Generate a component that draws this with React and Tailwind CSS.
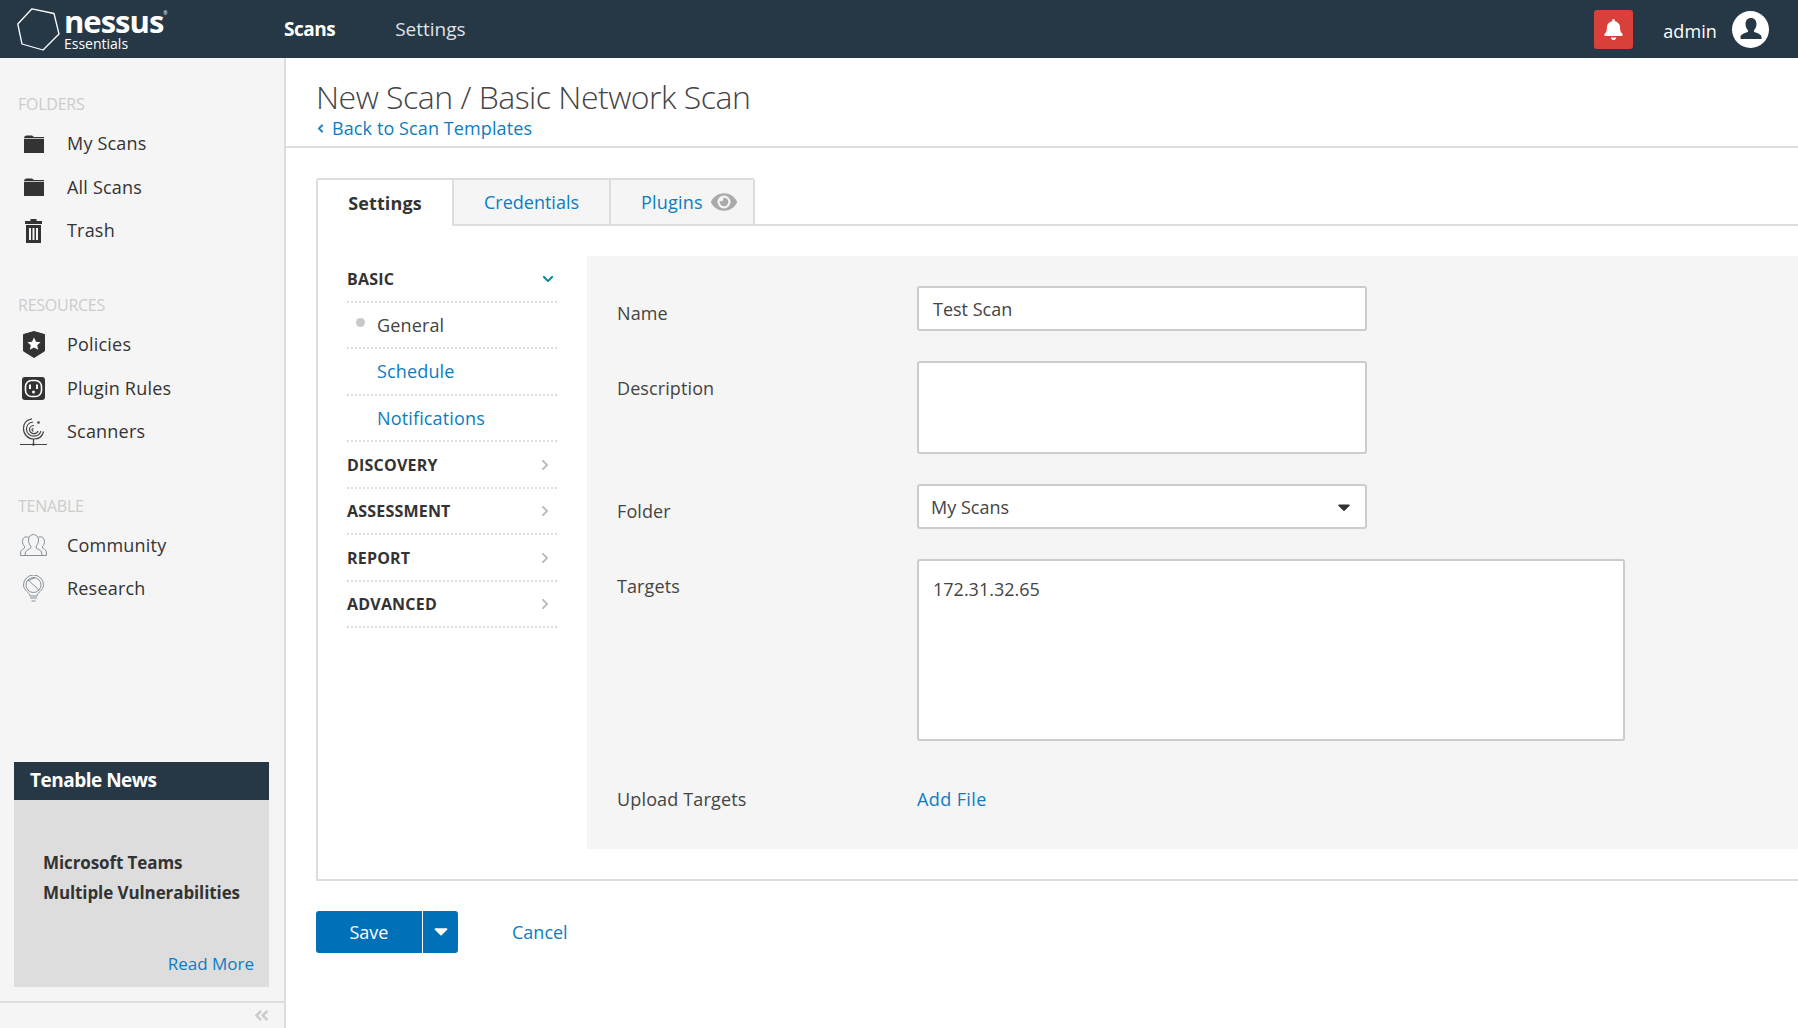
import React from 'react';
import { FaBell, FaEye, FaChevronDown, FaChevronRight, FaChevronLeft, FaCaretDown, FaAngleDoubleLeft } from 'react-icons/fa';

const FolderIcon = () => (
  <svg width="20" height="18" viewBox="0 0 20 18" fill="#333">
    <path d="M0 3 Q0 1 2 0.500 L8 0.500 L10 2 L20 2 L20 3.200 L0 3.200Z" />
    <rect x="0" y="4" width="20" height="14" />
  </svg>
);

const TrashIcon = () => (
  <svg width="17" height="24" viewBox="0 0 17 24" fill="#333">
    <path d="M5.500 0h6v2H17v3H0V2h5.500z" />
    <path fillRule="evenodd" d="M1 6h15v18H1zM4 9v12h2V9zm3.500 0v12h2V9zM11 9v12h2V9z" />
  </svg>
);

const ShieldIcon = () => (
  <svg width="22" height="27" viewBox="0 0 22 27">
    <path d="M11 0.500 L21.500 3.500 L21.500 20 L11 26.500 L0.500 20 L0.500 3.500Z" fill="#333" stroke="#333" strokeLinejoin="round" />
    <path d="M11 6.500l2 4.200 4.600.5-3.400 3.100 1 4.500-4.200-2.300-4.200 2.300 1-4.500-3.400-3.100 4.600-.5z" fill="#fff" />
  </svg>
);

const PlugIcon = () => (
  <svg width="23" height="23" viewBox="0 0 23 23">
    <rect width="23" height="23" rx="3" fill="#333" />
    <rect x="3.500" y="3.500" width="16" height="16" rx="6" fill="none" stroke="#fff" strokeWidth="1.600" />
    <rect x="7" y="7.500" width="2" height="4.500" fill="#fff" />
    <rect x="14" y="7.500" width="2" height="4.500" fill="#fff" />
    <circle cx="11.500" cy="15" r="1.500" fill="#fff" />
  </svg>
);

const ScannerIcon = () => (
  <svg width="27" height="28" viewBox="0 0 27 28" fill="none" stroke="#444" strokeWidth="1.200">
    <path d="M12 0.800C6 1.500 3.500 6 3.500 10.500 3.500 16.500 8 21 14 21c5 0 8.500-3 9.500-7.500" />
    <path d="M13 4C9 4.500 6.500 7.500 6.500 11c0 4.200 3.300 7.200 7.500 7.200 3.500 0 6-2 6.800-5" />
    <path d="M14 7.500c-2.500 0-4.500 1.700-4.500 4 0 2.500 2 4.200 4.500 4.200 2 0 3.500-1.200 4-2.700" />
    <path d="M13.500 10.500c-1 0-1.500.6-1.500 1.300 0 .8.7 1.300 1.500 1.300" />
    <circle cx="18.500" cy="4.500" r="1.300" fill="#444" stroke="none" />
    <path d="M0 26.500h27M13.500 21v5.500" />
    <circle cx="13.500" cy="26.500" r="1.300" fill="#444" stroke="none" />
  </svg>
);

const CommunityIcon = () => (
  <svg width="27" height="22" viewBox="0 0 27 22" fill="none" stroke="#6b7682" strokeWidth="0.800">
    <path d="M13.500 0.500c3 0 5 2.500 5 5.500 0 2.500-1 4.500-2.300 6v2c1 1 4.500 2 5.300 4l.5 3.500H5l.5-3.500c.8-2 4.300-3 5.300-4v-2C9.500 10.500 8.500 8.500 8.500 6c0-3 2-5.500 5-5.500z" />
    <path d="M8.700 3.500C8 3 7.300 2.800 6.500 2.800 3.800 2.800 2.500 5 2.500 7.500c0 2.200 1 4 2 5v1.500c-1 .9-3.300 1.500-3.800 3.500L.5 21.500H5" />
    <path d="M18.300 3.500c.7-.5 1.400-.7 2.200-.7 2.700 0 4 2.200 4 4.700 0 2.200-1 4-2 5v1.500c1 .9 3.300 1.500 3.800 3.500l.2 4H22" />
  </svg>
);

const BulbIcon = () => (
  <svg width="21" height="27" viewBox="0 0 21 27" fill="none" stroke="#6b7682" strokeWidth="0.800">
    <path d="M7 21C7 17.500 0.500 15.500 0.500 10A10 10 0 0 1 20.500 10C20.500 15.500 14 17.500 14 21z" />
    <circle cx="10.500" cy="10" r="7.500" />
    <path d="M5 5l11 10M12 2.600L5.500 5.500" />
    <path d="M7 23h7M8.500 26h4" />
  </svg>
);

const UserIcon = () => (
  <span className="flex h-[37px] w-[37px] items-center justify-center rounded-full bg-white">
    <svg width="24" height="24" viewBox="0 0 24 24" fill="#263746">
      <path d="M12 1c3.600 0 5.500 2.700 5.500 6 0 2.500-1 4.800-2.500 6.200v1.600c1.500 1 7.500 2 7.500 5.200v2H1.500v-2c0-3.200 6-4.200 7.500-5.200v-1.600C7.500 11.800 6.500 9.500 6.500 7c0-3.300 1.900-6 5.500-6z" />
    </svg>
  </span>
);

const NavItem = ({ icon, label }) => (
  <div className="flex h-[43.500px] items-center">
    <span className="flex w-[67px] shrink-0 justify-center">{icon}</span>
    <span className="text-[18px] tracking-[0.2px] text-[#333]">{label}</span>
  </div>
);

const NavSection = ({ title, items, className }) => (
  <div className={className}>
    <div className="mb-[8px] h-[20px] pl-[18px] text-[16px] leading-[20px] tracking-[-0.25px] text-[#ccc]">{title}</div>
    {items.map((it) => <NavItem key={it.label} {...it} />)}
  </div>
);

const AccordionHead = ({ label, open }) => (
  <div className="flex h-[46.500px] items-center justify-between border-b-2 border-dotted border-[#ddd] pr-[5px] pt-[1px] text-[16px] font-bold tracking-[0.2px] text-[#333]">
    <span>{label}</span>
    {open ? <FaChevronDown className="mr-[-2px] text-[12px] text-[#00849b]" /> : <FaChevronRight className="mr-[1px] text-[12px] text-[#bbb]" />}
  </div>
);

const SubItem = ({ label, active }) => (
  <div className={`relative flex h-[46.500px] items-center border-b-2 border-dotted border-[#ddd] pl-[30px] pt-[1px] text-[18px] tracking-[0.15px] ${active ? 'text-[#444]' : 'text-[#0d7cc1]'}`}>
    {active && <span className="absolute left-[9px] top-[15px] h-[9px] w-[9px] rounded-full bg-[#c8c8c8]" />}
    {label}
  </div>
);

const Field = ({ label, children }) => (
  <div className="flex">
    <div className="w-[330px] shrink-0 pl-[30px] pt-[14px] text-[18px] tracking-[0.1px] text-[#444]">{label}</div>
    {children}
  </div>
);

const inputBox = 'rounded-[3px] border-2 border-[#ccc] bg-white text-[18px] text-[#444]';

export default function App() {
  return (
    <div className="flex h-screen w-full flex-col overflow-hidden bg-white font-['Open_Sans',sans-serif]">
      {/* top bar */}
      <header className="flex h-[58px] shrink-0 items-center bg-[#263746] text-white">
        <div className="flex w-[284px] items-center pl-[17px]">
          <svg width="43" height="43" viewBox="0 0 43 43" fill="none" stroke="#fff" strokeWidth="1.300">
            <path d="M15 0.800 L37 5.500 L42 26 L26 42 L5 36 L0.800 16Z" strokeLinejoin="round" />
          </svg>
          <div className="relative ml-[4px] mt-[2px] flex flex-col">
            <span className="text-[31px] font-bold leading-[27px] tracking-[-1px]">nessus</span>
            <span className="text-[14px] leading-[17px]">Essentials</span>
            <span className="absolute right-[-4px] top-[2px] text-[5px] leading-[6px]">®</span>
          </div>
        </div>
        <span className="text-[19px] font-bold tracking-[-0.5px]">Scans</span>
        <span className="ml-[60px] text-[19px] text-[#dfe3e6]">Settings</span>
        <div className="ml-auto flex items-center pr-[29px]">
          <span className="flex h-[39px] w-[39px] items-center justify-center rounded-[3px] bg-[#d9403a]"><FaBell className="text-[21px] text-white" /></span>
          <span className="ml-[30px] mr-[15px] mt-[4px] text-[18px] tracking-[0.1px]">admin</span>
          <UserIcon />
        </div>
      </header>

      <div className="flex min-h-0 flex-1">
        {/* left sidebar */}
        <aside className="flex w-[286px] shrink-0 flex-col border-r-2 border-[#ddd] bg-[#f5f5f5]">
          <NavSection
            className="pt-[36px]"
            title="FOLDERS"
            items={[
              { icon: <FolderIcon />, label: 'My Scans' },
              { icon: <FolderIcon />, label: 'All Scans' },
              { icon: <TrashIcon />, label: 'Trash' },
            ]}
          />
          <NavSection
            className="mt-[42.500px]"
            title="RESOURCES"
            items={[
              { icon: <ShieldIcon />, label: 'Policies' },
              { icon: <PlugIcon />, label: 'Plugin Rules' },
              { icon: <ScannerIcon />, label: 'Scanners' },
            ]}
          />
          <NavSection
            className="mt-[42px]"
            title="TENABLE"
            items={[
              { icon: <CommunityIcon />, label: 'Community' },
              { icon: <BulbIcon />, label: 'Research' },
            ]}
          />

          <div className="ml-[14px] mt-auto flex h-[225px] w-[255px] flex-col bg-[#ddd]">
            <div className="flex h-[38px] items-center bg-[#263746] pb-[2px] pl-[16px] text-[19px] font-bold tracking-[-0.5px] text-white">Tenable News</div>
            <div className="flex-1 pl-[29px] pt-[48px] text-[17px] font-bold leading-[30px] tracking-[-0.1px] text-[#333]">
              Microsoft Teams<br />Multiple Vulnerabilities
            </div>
            <div className="pb-[11px] pr-[15px] text-right text-[17px] text-[#0d7cc1]">Read More</div>
          </div>
          <div className="mt-[14px] flex h-[27px] items-center justify-end border-t-2 border-[#ddd] pr-[14px]">
            <FaAngleDoubleLeft className="text-[17px] text-[#ccc]" />
          </div>
        </aside>

        {/* main */}
        <main className="min-w-0 flex-1">
          <div className="h-[90px] border-b-2 border-[#ddd] pl-[30px] pt-[19px]">
            <h1 className="text-[32px] font-light leading-[39px] tracking-[-0.5px] text-[#444]">New Scan / Basic Network Scan</h1>
            <a className="flex items-center text-[18px] leading-[24px] tracking-[0.1px] text-[#0d7cc1]"><FaChevronLeft className="mr-[7px] stroke-current stroke-[40] text-[9px]" />Back to Scan Templates</a>
          </div>

          <div className="pl-[30px] pt-[30px]">
            {/* tabs */}
            <div className="relative z-10 flex h-[48px] w-[439px] text-[18px]">
              <div className="flex w-[138px] items-center justify-center rounded-tl-[3px] border-2 border-b-0 border-[#ddd] bg-white font-bold tracking-[0.1px] text-[#333]">Settings</div>
              <div className="flex w-[157px] items-center justify-center border-y-2 border-r-2 border-[#ddd] bg-[#f5f5f5] text-[#0d7cc1]">Credentials</div>
              <div className="flex w-[144px] items-center gap-[8px] rounded-tr-[3px] border-y-2 border-r-2 border-[#ddd] bg-[#f5f5f5] pl-[30px] tracking-[0.2px] text-[#0d7cc1]">Plugins <FaEye className="text-[26px] text-[#aaa]" /></div>
            </div>

            {/* settings panel */}
            <div className="mt-[-2px] flex h-[657px] border-y-2 border-l-2 border-[#ddd] pl-[29px] pt-[30px]">
              <div className="w-[210px] shrink-0">
                <AccordionHead label="BASIC" open />
                <SubItem label="General" active />
                <SubItem label="Schedule" />
                <SubItem label="Notifications" />
                <AccordionHead label="DISCOVERY" />
                <AccordionHead label="ASSESSMENT" />
                <AccordionHead label="REPORT" />
                <AccordionHead label="ADVANCED" />
              </div>

              <div className="ml-[30px] h-[593px] flex-1 bg-[#f5f5f5] pt-[30px]">
                <Field label="Name">
                  <div className={`mb-[30px] flex h-[45px] w-[450px] items-center px-[14px] pt-[2px] ${inputBox}`}>Test Scan</div>
                </Field>
                <Field label="Description">
                  <div className={`mb-[30px] h-[93px] w-[450px] ${inputBox}`} />
                </Field>
                <Field label="Folder">
                  <div className={`mb-[30px] flex h-[45px] w-[450px] items-center justify-between pl-[12px] pr-[11px] ${inputBox}`}><span className="pt-[2px]">My Scans</span><FaCaretDown className="text-[20px] text-[#333]" /></div>
                </Field>
                <Field label="Targets">
                  <div className={`h-[182px] w-[708px] px-[14px] pt-[15px] ${inputBox}`}>172.31.32.65</div>
                </Field>
                <div className="mt-[45px] flex">
                  <div className="w-[330px] shrink-0 pl-[30px] text-[18px] tracking-[0.15px] text-[#444]">Upload Targets</div>
                  <span className="text-[18px] tracking-[0.4px] text-[#0d7cc1]">Add File</span>
                </div>
              </div>
            </div>

            {/* actions */}
            <div className="mt-[30px] flex h-[42px] items-center">
              <button className="h-full w-[106px] rounded-l-[3px] bg-[#0071b9] text-[18px] text-white">Save</button>
              <button className="ml-[1px] flex h-full w-[35px] items-center justify-center rounded-r-[3px] bg-[#0071b9] text-white"><FaCaretDown className="mb-[2px] text-[22px]" /></button>
              <a className="ml-[54px] text-[18px] text-[#0d7cc1]">Cancel</a>
            </div>
          </div>
        </main>
      </div>
    </div>
  );
}
